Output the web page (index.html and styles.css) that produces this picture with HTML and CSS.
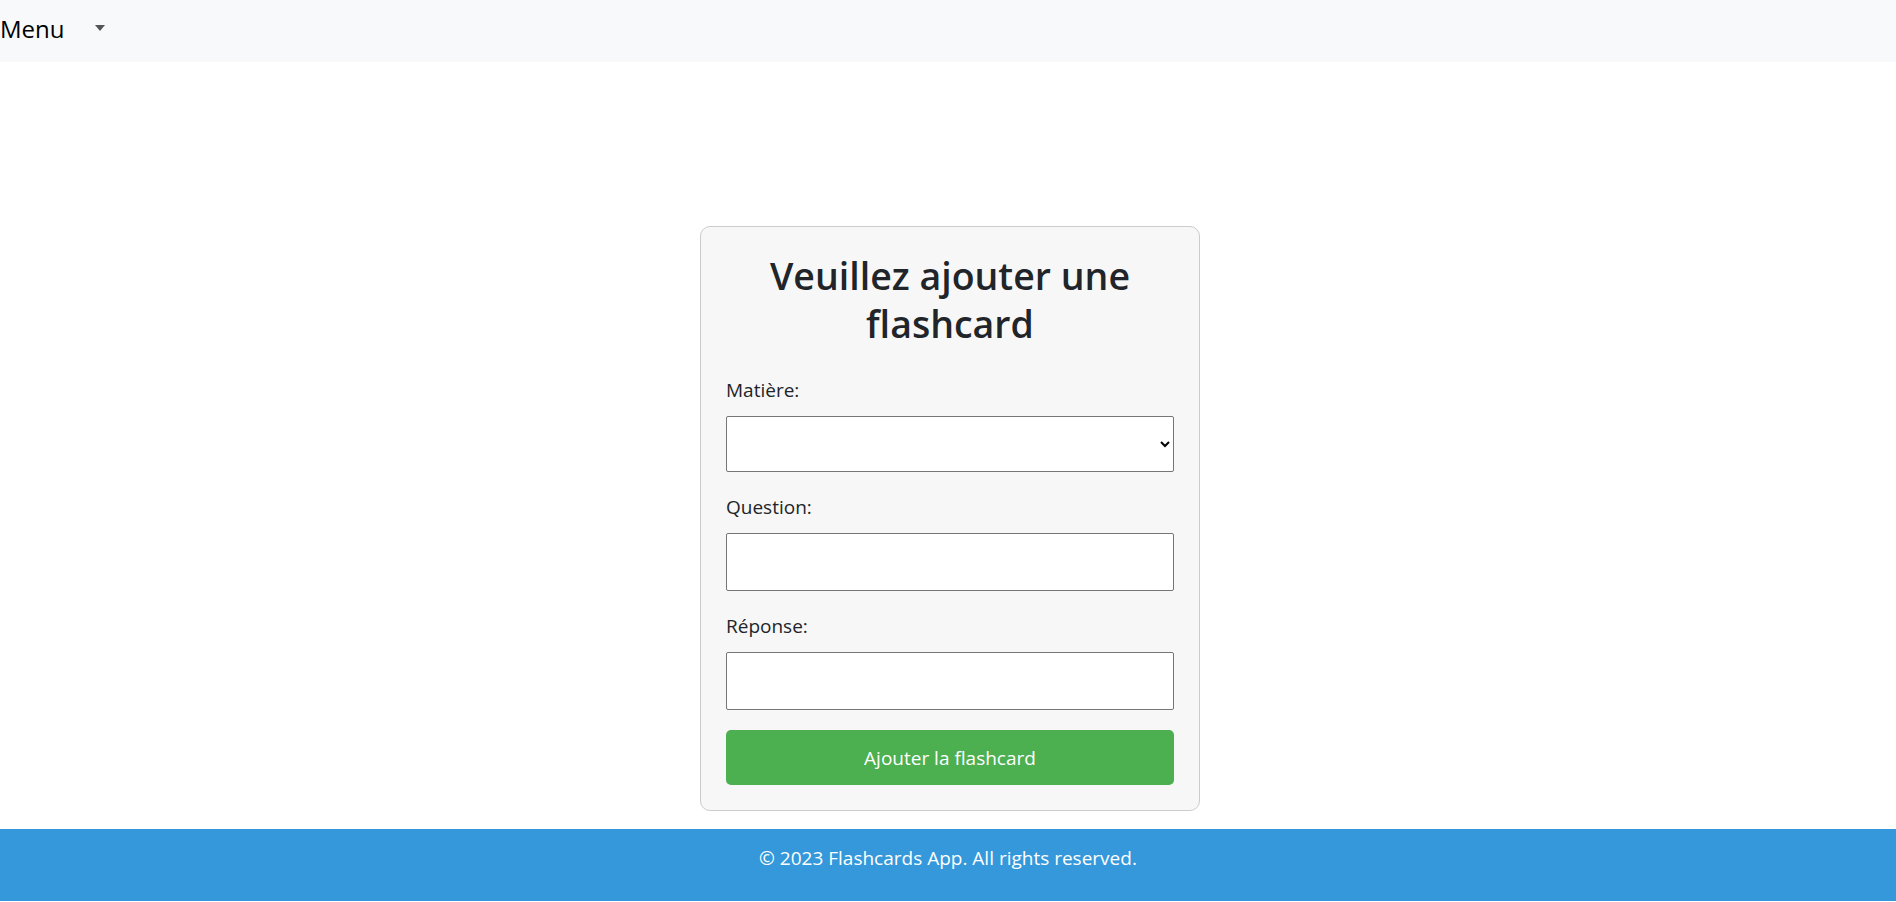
FILE: index.html
```html
<!DOCTYPE html>
<html lang="fr">
<head>
<meta charset="utf-8">
<title>Flashcards App</title>
<link rel="stylesheet" href="styles.css">
</head>
<body>
<nav class="navbar">
  <div class="menu">
    <span class="menu-label">Menu</span>
    <span class="caret"></span>
  </div>
</nav>
<main class="main">
  <div class="card">
    <h1 class="title">Veuillez ajouter une flashcard</h1>
    <form class="form">
      <div class="group">
        <label class="label" for="matiere">Matière:</label>
        <select class="select" id="matiere"></select>
      </div>
      <div class="group">
        <label class="label" for="question">Question:</label>
        <input class="input" id="question" type="text">
      </div>
      <div class="group">
        <label class="label" for="reponse">Réponse:</label>
        <input class="input" id="reponse" type="text">
      </div>
      <button class="btn" type="button">Ajouter la flashcard</button>
    </form>
  </div>
</main>
<footer class="footer">
  <p class="footer-text">© 2023 Flashcards App. All rights reserved.</p>
</footer>
</body>
</html>
```
FILE: styles.css
```css
* { box-sizing: border-box; }
html, body { margin: 0; padding: 0; }
body {
  font-family: "Open Sans", "Noto Sans", sans-serif;
  font-size: 20px;
  color: #212529;
  background: #fff;
  height: 902px;
  overflow: hidden;
}
.navbar {
  height: 62px;
  background: #f8f9fa;
  display: flex;
  align-items: center;
}
.menu {
  display: flex;
  align-items: center;
  margin-top: -4px;
}
.menu-label {
  font-size: 24px;
  color: #000;
  line-height: 1.5;
}
.caret {
  width: 0;
  height: 0;
  margin-left: 30px;
  margin-top: -3px;
  border-top: 6px solid #555;
  border-left: 5px solid transparent;
  border-right: 5px solid transparent;
}
.main {
  padding-top: 164px;
  padding-bottom: 18px;
  padding-left: 4px;
}
.card {
  width: 500px;
  margin: 0 auto;
  background: #f7f7f7;
  border: 1px solid #ccc;
  border-radius: 10px;
  padding: 25px;
}
.title {
  margin: 0 0 27px;
  font-size: 37.5px;
  font-weight: 600;
  line-height: 48px;
  text-align: center;
  color: #212529;
}
.form { display: flex; flex-direction: column; }
.group {
  display: flex;
  flex-direction: column;
  margin-bottom: 20px;
}
.label {
  font-size: 19px;
  line-height: 30px;
  margin-bottom: 11px;
  color: #212529;
}
.select, .input {
  width: 100%;
  border: 1px solid #767676;
  border-radius: 2px;
  background: #fff;
  font: inherit;
}
.select { height: 56px; padding: 0 8px; }
.input { height: 58px; padding: 0 10px; }
.btn {
  height: 55px;
  width: 100%;
  background: #4caf50;
  color: #fff;
  border: none;
  border-radius: 5px;
  font-family: inherit;
  font-size: 19px;
}
.footer {
  height: 72px;
  background: #3498db;
  color: #fff;
  text-align: center;
  padding-top: 14px;
}
.footer-text {
  margin: 0;
  font-size: 19px;
  line-height: 30px;
}
```
